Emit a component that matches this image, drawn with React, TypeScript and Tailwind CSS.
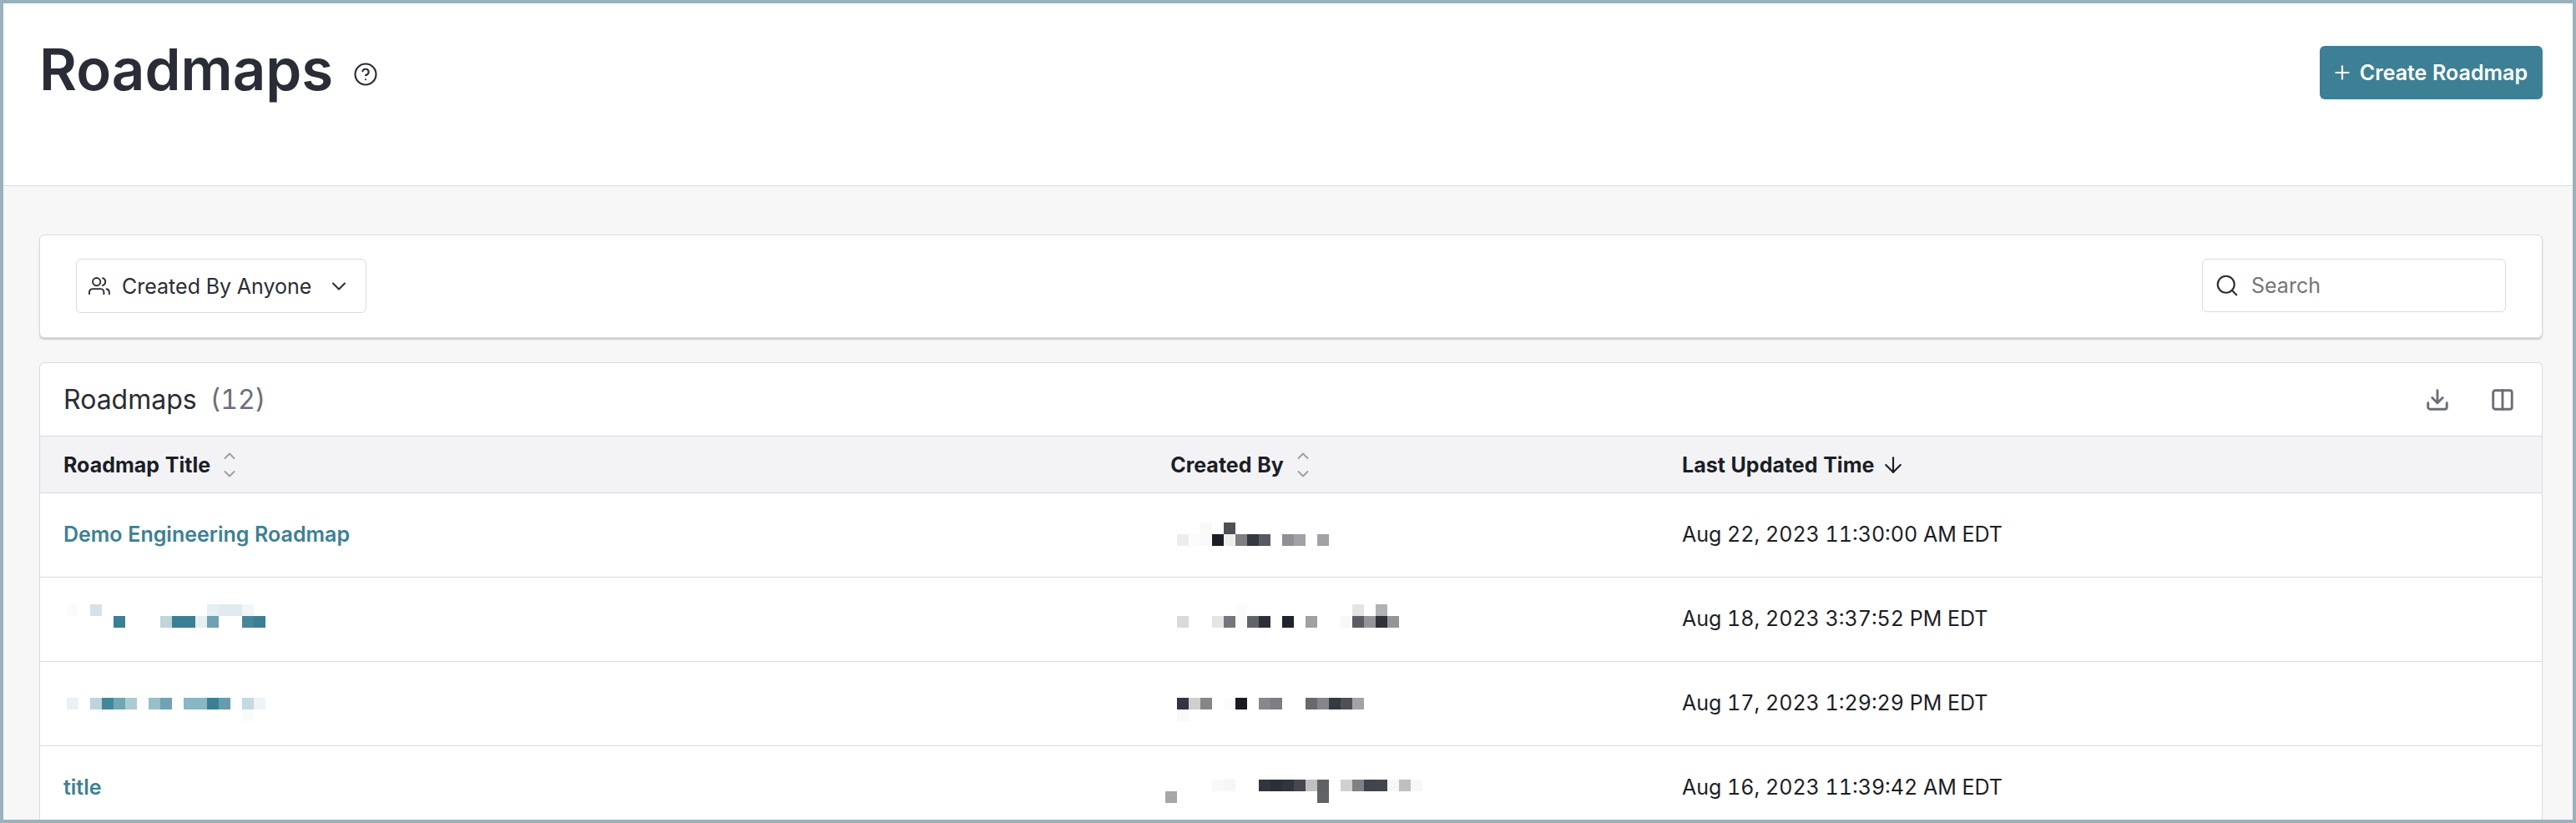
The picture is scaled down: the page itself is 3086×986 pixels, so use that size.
import React, { useState } from 'react';
import { ArrowDown, ChevronDown, CircleHelp, Columns2, Download, Plus, Search } from 'lucide-react';

type Cell = [x: number, y: number, color: string];

interface Roadmap {
  title?: string;
  titleCells?: Cell[];
  ownerCells: Cell[];
  updated: string;
}

const CELL = 14;

// Redacted values are stored as coloured cells, offset from the top left of the row
const roadmaps: Roadmap[] = [
  {
    title: 'Demo Engineering Roadmap',
    ownerCells: [
      [36, 35, '#f9f9f9'], [64, 35, '#4f5055'],
      [8, 49, '#ededed'], [22, 49, '#fcfcfc'], [36, 49, '#f9f9f9'], [50, 49, '#1b1e26'], [64, 49, '#eeeeee'],
      [78, 49, '#7e7f83'], [92, 49, '#353840'], [106, 49, '#595a5f'], [134, 49, '#8f9094'],
      [148, 49, '#a1a2a6'], [176, 49, '#a1a2a6'],
    ],
    updated: 'Aug 22, 2023 11:30:00 AM EDT',
  },
  {
    titleCells: [
      [4, 32, '#fafcfb'], [32, 32, '#d5e3e8'], [172, 32, '#e6eff1'], [186, 32, '#e1eaed'], [200, 32, '#dfeaf0'], [214, 32, '#f2f6f8'],
      [60, 46, '#3b7f94'], [116, 46, '#bed5db'], [130, 46, '#3b7f94'], [144, 46, '#3b7f94'], [158, 46, '#e6eff2'],
      [172, 46, '#6da2b2'], [214, 46, '#458799'], [228, 46, '#3b7f94'],
    ],
    ownerCells: [
      [78, 32, '#fbfbfb'], [218, 32, '#e4e4e4'], [246, 32, '#b1b2b4'],
      [8, 46, '#dadada'], [50, 46, '#e4e6e5'], [64, 46, '#75767b'], [78, 46, '#fafafa'], [92, 46, '#63646a'],
      [106, 46, '#2d3038'], [134, 46, '#20232b'], [162, 46, '#a0a1a5'], [204, 46, '#f8f8f8'],
      [218, 46, '#5c5d62'], [232, 46, '#949599'], [246, 46, '#2f3139'], [260, 46, '#949599'],
    ],
    updated: 'Aug 18, 2023 3:37:52 PM EDT',
  },
  {
    titleCells: [
      [4, 43, '#e8f1f3'], [32, 43, '#bdd4da'], [46, 43, '#458799'], [60, 43, '#72a6b3'], [74, 43, '#abcad2'],
      [102, 43, '#98bfc9'], [116, 43, '#6fa3b4'], [144, 43, '#8ab6c3'], [158, 43, '#8ab6c3'], [172, 43, '#3b7f94'],
      [186, 43, '#669dac'], [214, 43, '#c5d9e0'], [228, 43, '#edf3f6'], [214, 57, '#fafcfc'],
    ],
    ownerCells: [
      [8, 43, '#33363e'], [22, 43, '#cfcfcf'], [36, 43, '#85868a'], [64, 43, '#fcfcfc'], [78, 43, '#191c24'],
      [106, 43, '#87888c'], [120, 43, '#7d7e83'], [162, 43, '#68696e'], [176, 43, '#85868a'], [190, 43, '#363941'],
      [204, 43, '#505156'], [218, 43, '#a2a3a7'], [8, 57, '#f9f9f9'],
    ],
    updated: 'Aug 17, 2023 1:29:29 PM EDT',
  },
  {
    title: 'title',
    ownerCells: [
      [50, 40, '#f9f9f9'], [64, 40, '#f6f6f6'], [106, 40, '#32353d'], [120, 40, '#2c2f38'], [134, 40, '#32353d'],
      [148, 40, '#454850'], [162, 40, '#c0c0c3'], [176, 40, '#606166'], [204, 40, '#d0d0d0'], [218, 40, '#808185'],
      [232, 40, '#41444c'], [246, 40, '#43464d'], [260, 40, '#f7f7f7'], [274, 40, '#bebfc1'], [288, 40, '#f7f7f7'],
      [-6, 54, '#a6a7ab'], [176, 54, '#626368'],
    ],
    updated: 'Aug 16, 2023 11:39:42 AM EDT',
  },
];

function Mosaic({ cells }: { cells: Cell[] }) {
  return (
    <svg width="320" height="100" viewBox="0 0 320 100" shapeRendering="crispEdges" className="block overflow-visible" aria-hidden="true">
      {cells.map(([x, y, color]) => (
        <rect key={`${x}-${y}`} x={x} y={y} width={CELL} height={CELL} fill={color} />
      ))}
    </svg>
  );
}

function UsersIcon() {
  return (
    <svg width="26" height="22" viewBox="0 0 26 22" fill="none" stroke="currentColor" strokeWidth="1.9" strokeLinecap="round" strokeLinejoin="round" aria-hidden="true">
      <circle cx="9.7" cy="5.6" r="4.6" />
      <path d="M1 20.3v-2.2a4 4 0 0 1 4-4h9.4a4 4 0 0 1 4 4v2.2" />
      <path d="M17 1.2a4.6 4.6 0 0 1 0 8.8" />
      <path d="M21.6 14.3a4 4 0 0 1 3.3 3.9v2.1" />
    </svg>
  );
}

function SortIcon() {
  return (
    <svg width="14" height="30" viewBox="0 0 14 30" fill="none" stroke="#9b9ca4" strokeWidth="1.9" strokeLinecap="round" strokeLinejoin="round" aria-hidden="true">
      <path d="M1.5 7 7 1.5 12.5 7" />
      <path d="M1.5 23 7 28.5 12.5 23" />
    </svg>
  );
}

export default function App() {
  const [owner, setOwner] = useState('anyone');
  const [query, setQuery] = useState('');

  return (
    <div className="h-screen flex flex-col overflow-hidden border-4 border-[#9ab1be] bg-[#f7f7f7] font-['Inter',sans-serif] text-[25px] leading-8 tabular-nums text-[#2a2d35]">

      {/* Page header */}
      <header className="shrink-0 h-[219px] flex items-start justify-between bg-white border-b border-[#d9dae3] pl-[43px] pr-9 pt-[51px]">
        <div className="flex items-center gap-6">
          <h1 className="text-[69px] leading-[56px] font-semibold">Roadmaps</h1>
          <button aria-label="Help" className="pt-3">
            <CircleHelp size={30} strokeWidth={1.7} />
          </button>
        </div>
        <button className="h-16 flex items-center gap-2 rounded-md bg-[#3d8095] pl-[14px] pr-[18px] font-semibold text-white">
          <Plus size={26} strokeWidth={2} />
          Create Roadmap
        </button>
      </header>

      <main className="flex-1 min-h-0 flex flex-col gap-[29px] pl-[43px] pr-9 pt-[58px]">

        {/* Filters */}
        <section className="shrink-0 flex items-start justify-between rounded-md border border-[#d9dae3] bg-white px-[43px] pt-7 pb-[29px] shadow-[0_2px_2px_rgba(0,0,0,0.18)]">
          <label className="h-[65px] flex items-center rounded-md border border-[#d9dae3] pl-[14px] pr-[18px]">
            <UsersIcon />
            <select
              aria-label="Created by"
              value={owner}
              onChange={(e) => setOwner(e.target.value)}
              className="appearance-none bg-transparent pl-[14px] pr-[18px] outline-none"
            >
              <option value="anyone">Created By Anyone</option>
              <option value="me">Created By Me</option>
            </select>
            <ChevronDown size={28} strokeWidth={1.8} />
          </label>

          <label className="w-[364px] h-16 flex items-center gap-[14px] rounded-md border border-[#d9dae3] pl-[14px] pr-[18px]">
            <Search size={30} strokeWidth={1.7} className="shrink-0" />
            <input
              type="text"
              aria-label="Search roadmaps"
              placeholder="Search"
              value={query}
              onChange={(e) => setQuery(e.target.value)}
              className="min-w-0 flex-1 bg-transparent outline-none placeholder:text-[#757575]"
            />
          </label>
        </section>

        {/* Roadmap list */}
        <section className="flex-1 min-h-0 overflow-hidden rounded-t-md border border-b-0 border-[#d9dae3] bg-white">
          <div className="h-[88px] flex items-center justify-between border-b border-[#d9dae3] pl-7 pr-8">
            <h2 className="flex gap-4 text-[32px]">
              Roadmaps <span className="text-[#6b6e76]">(12)</span>
            </h2>
            <div className="flex gap-12 text-[#6b6e76]">
              <button aria-label="Download">
                <Download size={30} strokeWidth={2.3} />
              </button>
              <button aria-label="Columns">
                <Columns2 size={30} strokeWidth={2.3} />
              </button>
            </div>
          </div>

          <table className="w-full table-fixed border-separate border-spacing-0 text-left text-[#1b1e26]">
            <colgroup>
              <col className="w-[44.25%]" />
              <col className="w-[20.45%]" />
              <col />
            </colgroup>
            <thead className="bg-[#f3f3f6]">
              <tr>
                <th className="h-[68px] border-b border-[#d9dae3] px-7 py-0 font-bold">
                  <button className="flex items-center gap-4">Roadmap Title <SortIcon /></button>
                </th>
                <th className="h-[68px] border-b border-[#d9dae3] px-7 py-0 font-bold">
                  <button className="flex items-center gap-4">Created By <SortIcon /></button>
                </th>
                <th className="h-[68px] border-b border-[#d9dae3] px-7 py-0 font-bold">
                  <button className="flex items-center gap-2">
                    Last Updated Time <ArrowDown size={30} strokeWidth={1.7} />
                  </button>
                </th>
              </tr>
            </thead>
            <tbody>
              {roadmaps.map((roadmap) => (
                <tr key={roadmap.updated}>
                  <td className="h-[101px] border-b border-[#d9dae3] px-7 py-0">
                    {roadmap.title && (
                      <a href="#" className="block pb-[2px] font-semibold text-[#3d8095]">{roadmap.title}</a>
                    )}
                    {roadmap.titleCells && <Mosaic cells={roadmap.titleCells} />}
                  </td>
                  <td className="h-[101px] border-b border-[#d9dae3] px-7 py-0">
                    <Mosaic cells={roadmap.ownerCells} />
                  </td>
                  <td className="h-[101px] border-b border-[#d9dae3] px-7 pt-0 pb-[2px]">{roadmap.updated}</td>
                </tr>
              ))}
            </tbody>
          </table>
        </section>
      </main>
    </div>
  );
}
